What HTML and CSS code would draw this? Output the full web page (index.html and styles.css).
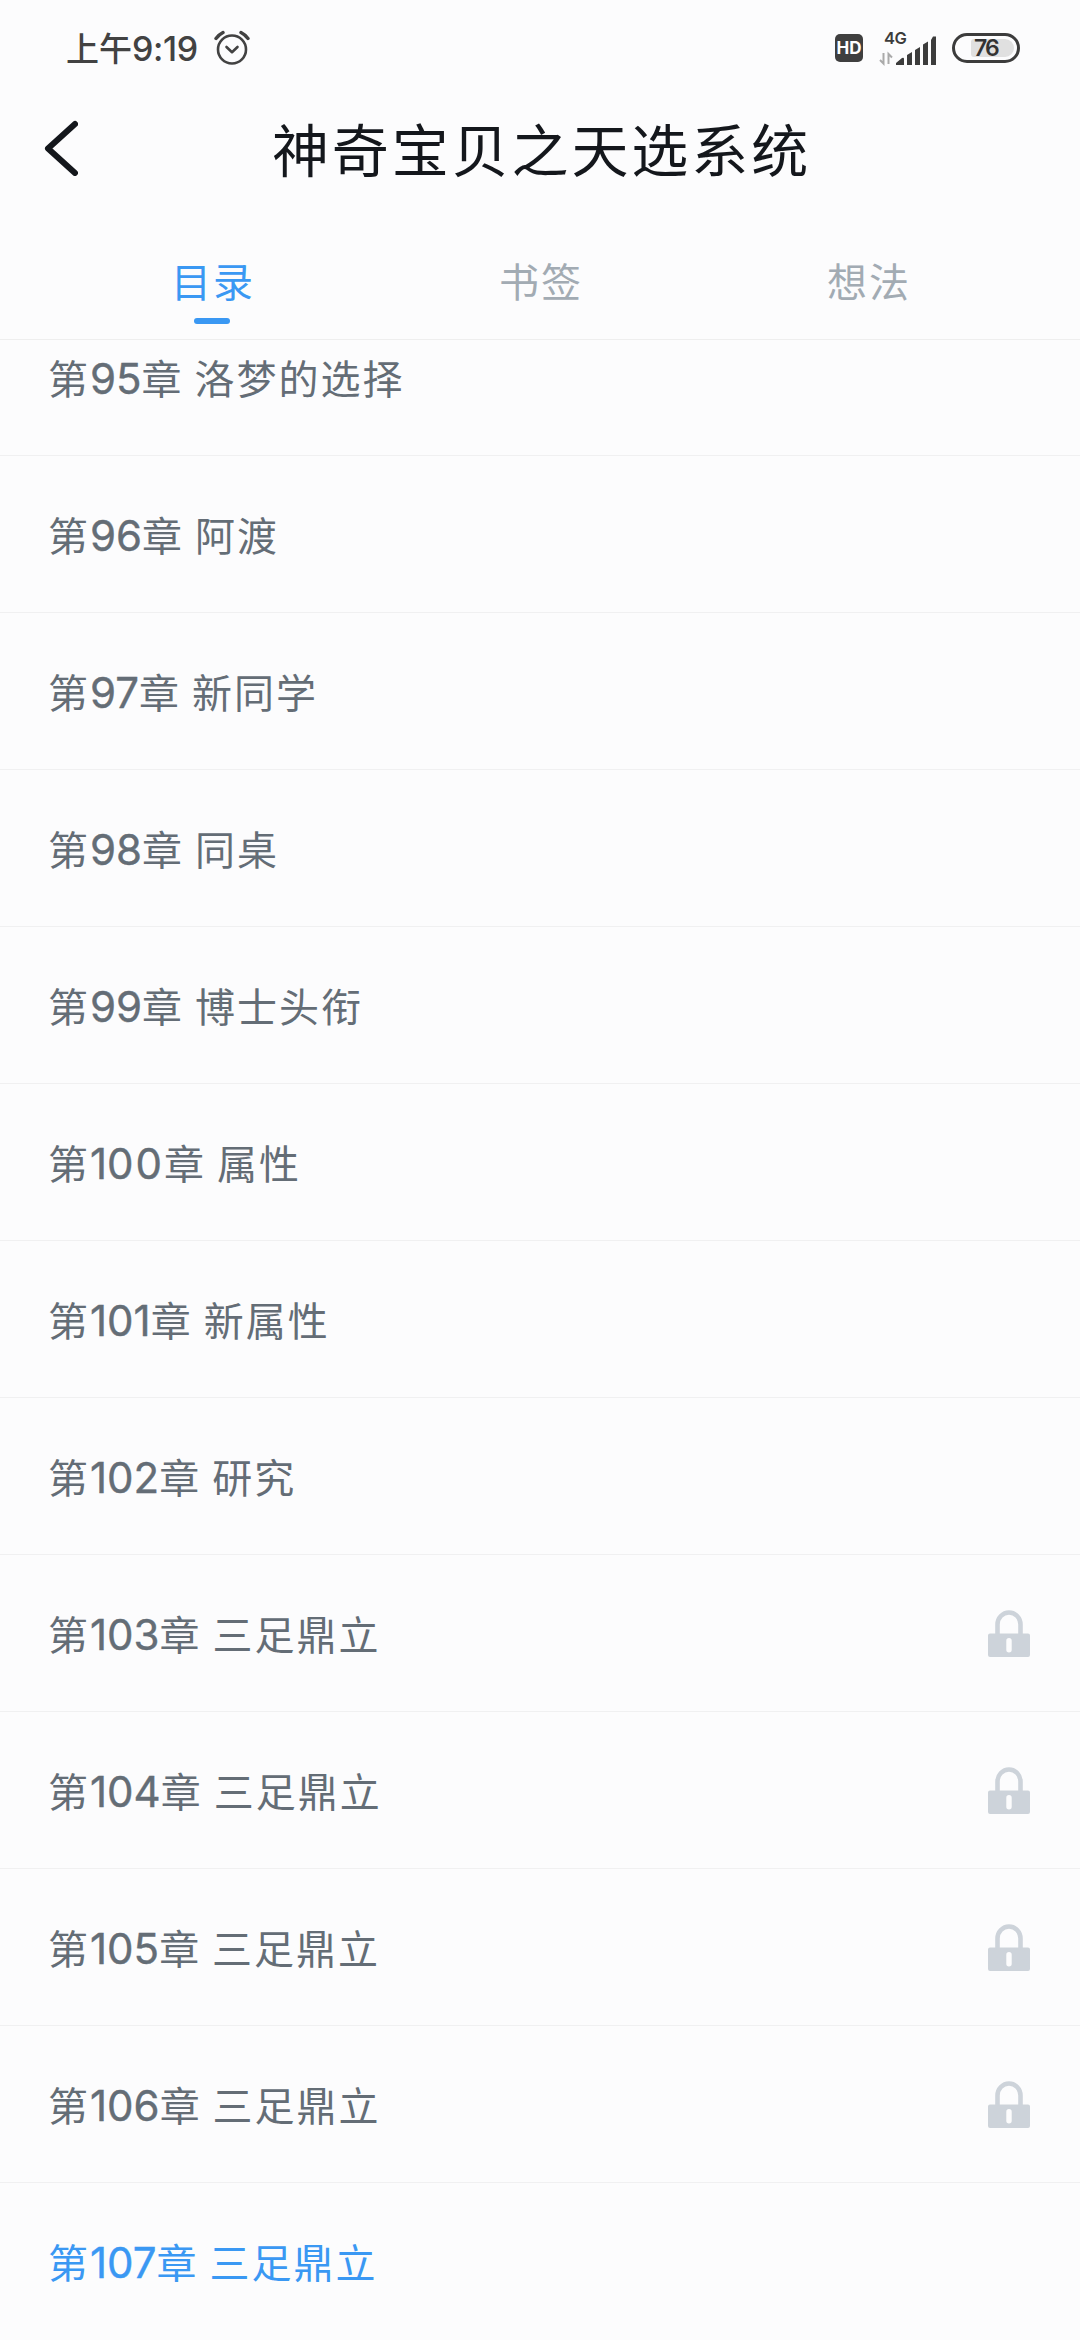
FILE: index.html
```
<!DOCTYPE html>
<html lang="zh-CN">
<head>
<meta charset="utf-8">
<title>神奇宝贝之天选系统</title>
<link rel="stylesheet" href="styles.css">
</head>
<body>
<svg class="defs" width="0" height="0">
  <symbol id="lock" viewBox="0 0 42 48">
    <path d="M9.500 26V14.500a11.500 12 0 0 1 23 0V26" fill="none" stroke="currentColor" stroke-width="4.600"/>
    <path fill="currentColor" fill-rule="evenodd" d="M2 23.500h38a2 2 0 0 1 2 2V45a2 2 0 0 1-2 2H2a2 2 0 0 1-2-2V25.500a2 2 0 0 1 2-2zM21 28a2.700 2.700 0 0 0-2.700 2.700v9a2.700 2.700 0 0 0 5.400 0v-9A2.700 2.700 0 0 0 21 28z"/>
  </symbol>
</svg>
<div class="screen">
  <div class="status">
    <span class="clock">上午<span class="time">9:19</span></span>
    <svg class="alarm" width="36" height="36" viewBox="0 0 36 36" fill="none" stroke="#424242" stroke-width="2.600" stroke-linecap="round" stroke-linejoin="round">
      <circle cx="18" cy="19.500" r="14"/>
      <path d="M12.500 17l5.500 5.200 5.500-5.200"/>
      <path d="M2 8.500Q5 4.500 9 2.500M34 8.500Q31 4.500 27 2.500" stroke-width="3.400"/>
    </svg>
    <span class="hd">HD</span>
    <span class="signal">
      <span class="net">4G</span>
      <svg width="58" height="30" viewBox="0 0 58 30">
        <path d="M4.500 17v10.500L1 24M9.500 28V18l3.500 3.500" fill="none" stroke="#aaa" stroke-width="2"/>
        <path fill="#3c3c3c" d="M17 29v-2l6-5q2-1 2 1v6zM28 29V19l5-3v13zM36 29V14l5-3v18zM44 29V8.500l5-3V29zM52 29V4l2-3.500h3V29z"/>
      </svg>
    </span>
    <span class="battery"><span class="level">76</span></span>
  </div>
  <header class="bar">
    <svg class="back" width="34" height="56" viewBox="0 0 34 56" fill="none" stroke="#14171c" stroke-width="6" stroke-linecap="round" stroke-linejoin="round">
      <path d="M31 4L4 28.500L31 53"/>
    </svg>
    <h1 class="title">神奇宝贝之天选系统</h1>
  </header>
  <nav class="tabs">
    <span class="tab tab-active">目录</span>
    <span class="tab">书签</span>
    <span class="tab">想法</span>
  </nav>
  <ul class="list">
    <li class="row row-cut"><span>第<b>95</b>章 洛梦的选择</span></li>
    <li class="row"><span>第<b>96</b>章 阿渡</span></li>
    <li class="row"><span>第<b>97</b>章 新同学</span></li>
    <li class="row"><span>第<b>98</b>章 同桌</span></li>
    <li class="row"><span>第<b>99</b>章 博士头衔</span></li>
    <li class="row"><span>第<b>1<i>00</i></b>章 属性</span></li>
    <li class="row"><span>第<b>101</b>章 新属性</span></li>
    <li class="row"><span>第<b>102</b>章 研究</span></li>
    <li class="row"><span>第<b>103</b>章 三足鼎立</span><svg class="lock"><use href="#lock"/></svg></li>
    <li class="row"><span>第<b>104</b>章 三足鼎立</span><svg class="lock"><use href="#lock"/></svg></li>
    <li class="row"><span>第<b>105</b>章 三足鼎立</span><svg class="lock"><use href="#lock"/></svg></li>
    <li class="row"><span>第<b>106</b>章 三足鼎立</span><svg class="lock"><use href="#lock"/></svg></li>
    <li class="row row-current"><span>第<b>107</b>章 三足鼎立</span></li>
  </ul>
</div>
</body>
</html>
```
FILE: styles.css
```
* { box-sizing: border-box; }
body {
  margin: 0;
  background: #fcfcfd;
  font-family: "Noto Sans CJK SC", sans-serif;
}
.defs { display: block; }
.screen {
  width: 1080px;
  height: 2340px;
  overflow: hidden;
  display: flex;
  flex-direction: column;
}
.status {
  height: 96px;
  padding: 0 60px 0 66px;
  display: flex;
  align-items: center;
  color: #424242;
}
.clock { font-size: 33px; line-height: 48px; font-weight: 500; white-space: nowrap; }
.time {
  font-family: Inter, sans-serif;
  font-size: 34px;
  font-weight: 500;
  letter-spacing: -0.400px;
}
.alarm { margin-left: 16px; }
.hd {
  margin-left: auto;
  width: 28px;
  height: 28px;
  border-radius: 5px;
  background: #3f3f3f;
  color: #fff;
  font: 700 17px/29px Inter, sans-serif;
  text-align: center;
}
.signal {
  margin-left: 16px;
  width: 58px;
  height: 36px;
  display: flex;
  flex-direction: column;
  justify-content: flex-end;
}
.net {
  height: 3px;
  padding-left: 5px;
  font: 600 16.500px/10px Inter, sans-serif;
  letter-spacing: -0.500px;
  color: #3c3c3c;
}
.battery {
  margin-left: 15px;
  width: 68px;
  height: 30px;
  border: 3px solid #3c3c3c;
  border-radius: 15px;
  padding: 3px 3px 3px 16px;
  display: flex;
}
.level {
  flex: 1;
  border-radius: 3px 9px 9px 3px;
  background: #e0e0e0;
  padding-left: 3px;
  font: 600 23px/18px Inter, sans-serif;
  letter-spacing: -2px;
  color: #333;
}
.bar {
  height: 138px;
  padding: 0 44px;
  display: grid;
  grid-template-columns: 34px 1fr 34px;
  align-items: start;
}
.back { margin-top: 24px; }
.title {
  margin: 6px 0 0;
  font-size: 57px;
  line-height: 90px;
  font-weight: 400;
  letter-spacing: 2.900px;
  text-indent: 3px;
  text-align: center;
  white-space: nowrap;
  color: #14171c;
}
.tabs {
  height: 107px;
  padding: 0 48px;
  display: grid;
  grid-template-columns: repeat(3, 1fr);
  border-bottom: 1px solid #eee;
}
.tab {
  display: flex;
  flex-direction: column;
  align-items: center;
  padding-top: 17px;
  font-size: 40px;
  line-height: 60px;
  letter-spacing: 2px;
  text-indent: 2px;
  color: #a2abb3;
}
.tab-active { color: #3a98f3; }
.tab-active::after {
  content: "";
  width: 36px;
  height: 6px;
  margin-top: 8px;
  border-radius: 3px;
  background: #3a98f3;
}
.list { margin: 0; padding: 0; list-style: none; }
.row {
  height: 157px;
  padding: 2px 50px 0 48px;
  display: flex;
  align-items: center;
  justify-content: space-between;
  border-bottom: 1px solid #f0f0f1;
  font-size: 40px;
  line-height: 60px;
  letter-spacing: 2px;
  color: #646d76;
}
.row-cut { height: 116px; padding-top: 0; padding-bottom: 40px; }
.row-current { color: #3a98f3; border-bottom-color: transparent; }
.row b {
  font-family: Inter, sans-serif;
  font-size: 42px;
  font-weight: 400;
  letter-spacing: 0;
  -webkit-text-stroke: 0.400px currentColor;
}
.row i { font-style: normal; letter-spacing: 2px; }
.lock { width: 42px; height: 48px; color: #cdd3da; }
```
